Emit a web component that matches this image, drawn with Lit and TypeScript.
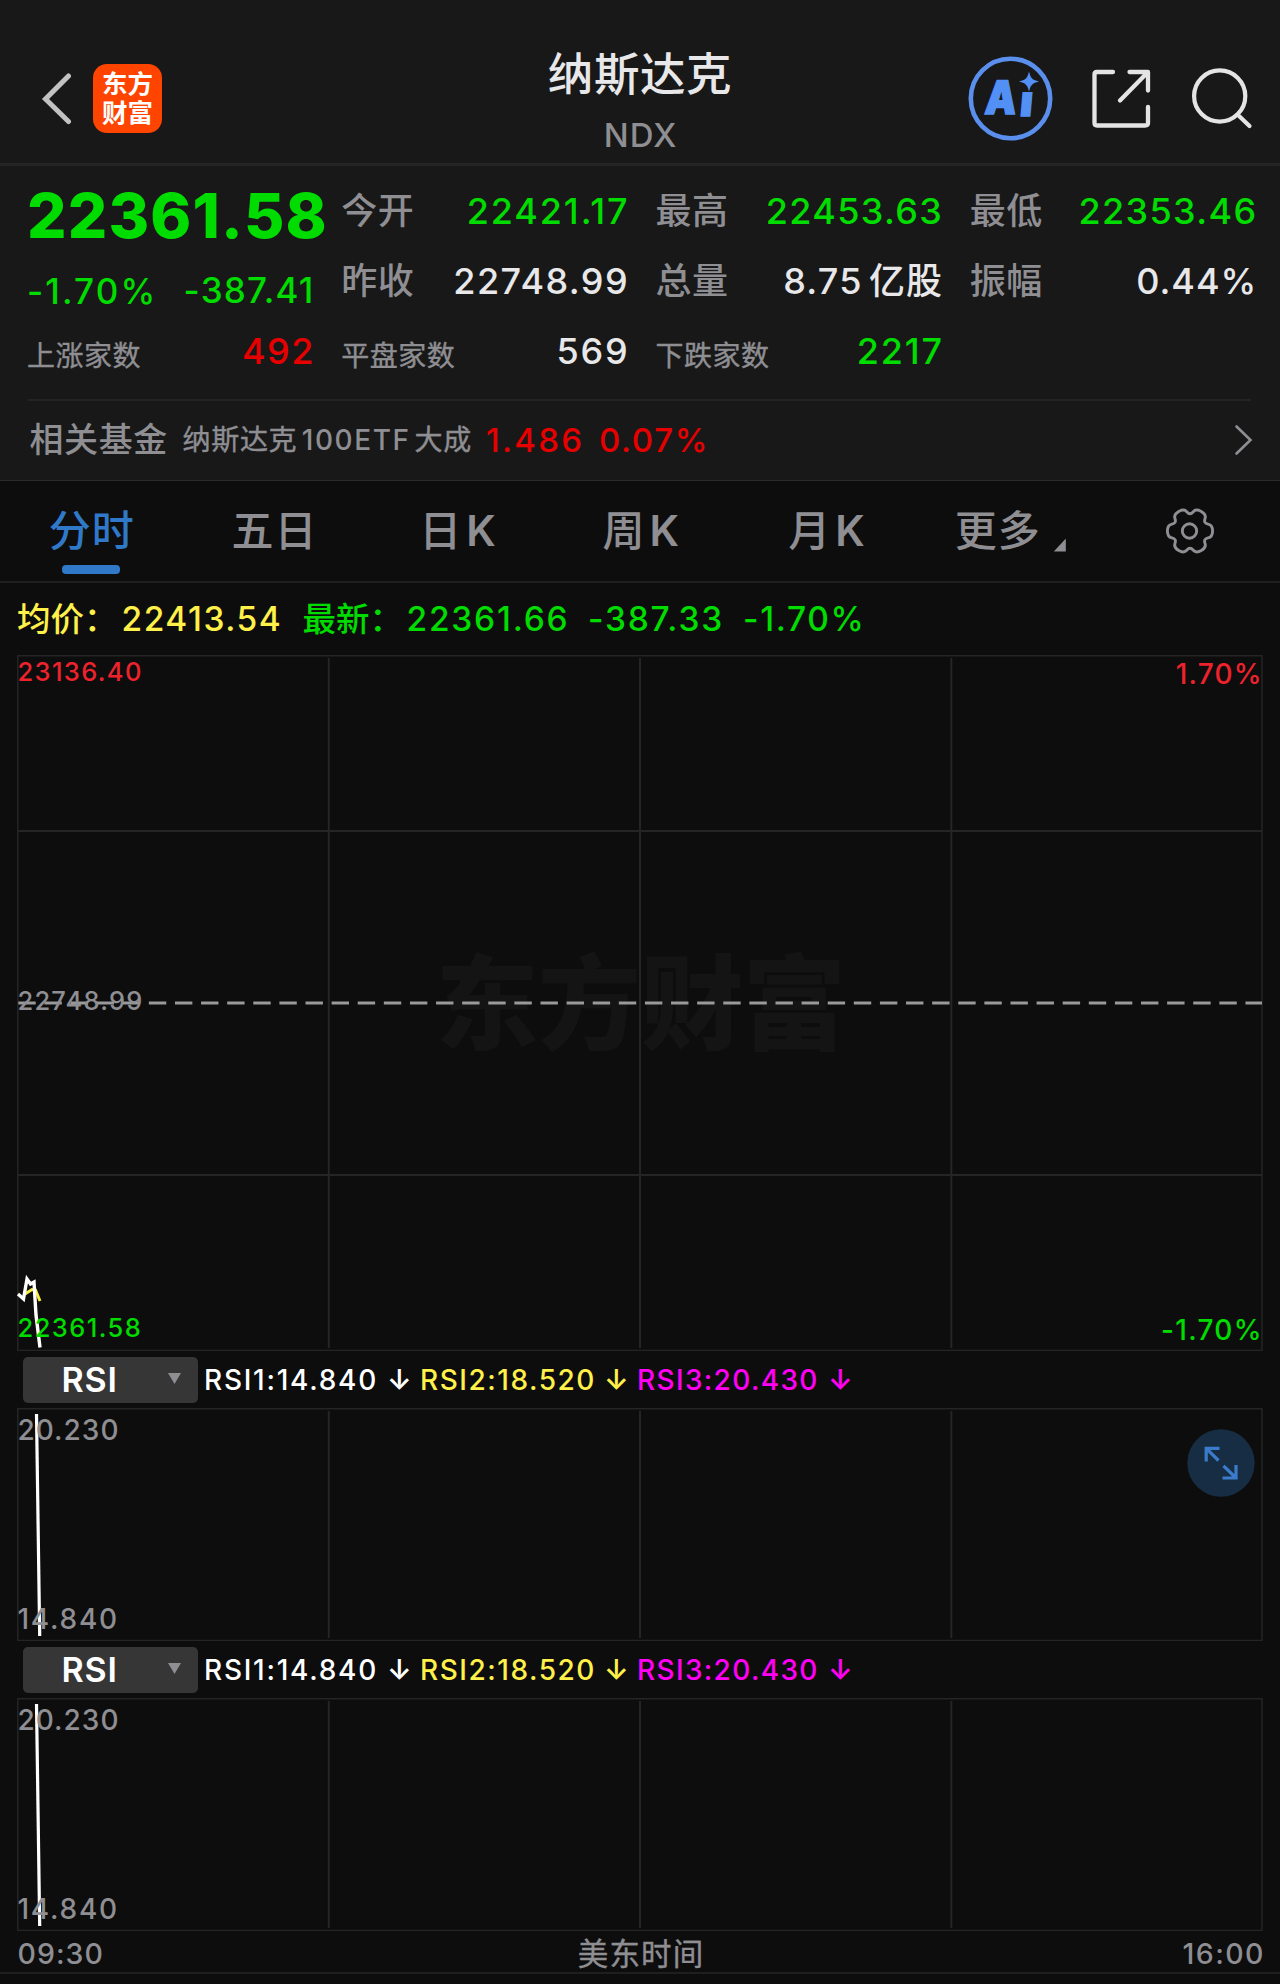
import { LitElement, html, css, svg } from "lit";
import { customElement, property } from "lit/decorators.js";

type Tone = "up" | "down" | "plain" | "muted" | "avg" | "hot" | "magenta";

const tones = css`
  .run { font-weight: 530; }
  .up { color: #e60000; }
  .down { color: #00dc00; }
  .plain { color: #e8e8ea; }
  .muted { color: #8e8e93; }
  .avg { color: #fff04a; }
  .hot { color: #ee222c; }
  .magenta { color: #ff00f4; }
`;

// A run of figures with its tracking in em; the trailing space is taken back so that right edges line up.
const run = (text: string, tone: Tone, track = 0.045, extra = "") =>
  html`<span class="run ${tone} ${extra}" style="letter-spacing:${track}em;margin-right:${-track}em">${text}</span>`;

@customElement("quote-header")
class QuoteHeader extends LitElement {
  static styles = [tones, css`
    :host { display: block; }
    .bar { height: 163px; border-bottom: 3px solid #242424; background: #181818; display: grid;
      grid-template-columns: 1fr auto 1fr; box-sizing: content-box; }
    .left { display: flex; align-items: center; padding: 33px 0 0 41px; height: 130px; }
    .logo { margin-left: 21px; width: 69px; height: 69px; border-radius: 14px; background: #ff4400; color: #fff;
      display: flex; flex-direction: column; align-items: center; justify-content: center; text-align: center;
      font: 700 25.5px/29px Inter, "Noto Sans CJK SC", sans-serif; }
    .logo div { height: 29px; }
    .mid { display: flex; flex-direction: column; align-items: center; }
    .title { margin-top: 45px; font-size: 45.5px; line-height: 60px; letter-spacing: 0.6px; color: #e8e8ea; font-weight: 500; }
    .code { margin-top: 10px; font-size: 33px; line-height: 40px; font-weight: 500; }
    .right { display: flex; justify-content: flex-end; padding-right: 26.7px; padding-top: 33px; height: 130px; align-items: center; }
    svg { display: block; }
    .ai { margin-right: 37px; }
    .share { margin-right: 40.6px; }
    .letters { font: 900 46px Inter, sans-serif; }
  `];
  render() {
    return html`<div class="bar">
      <div class="left">
        <svg width="31" height="54" viewBox="0 0 31 54" fill="none" stroke="#c2c2c2" stroke-width="5" stroke-linecap="round"><path d="M27.5 5 4.5 28 27.5 50.500"/></svg>
        <div class="logo"><div>东方</div><div>财富</div></div>
      </div>
      <div class="mid"><div class="title">纳斯达克</div><div class="code">${run("NDX", "muted", 0.03)}</div></div>
      <div class="right">
        <svg class="ai" width="86" height="86" viewBox="0 0 86 86">
          <defs><clipPath id="stem"><rect x="40" y="37" width="46" height="30"/></clipPath></defs>
          <circle cx="42.500" cy="43.500" r="39.700" fill="none" stroke="#5a8fee" stroke-width="4.600"/>
          <g class="letters" fill="#5390f5" stroke="#5390f5" stroke-width="1.500">
            <text transform="translate(16 58.500) skewX(-5) scale(.86 1)">A</text>
            <g clip-path="url(#stem)"><text transform="translate(51 60.500) skewX(-5) scale(.95 1)">i</text></g>
          </g>
          <path d="M61 20q1.500 5 6.500 6.500-5 1.500-6.500 6.500-1.500-5-6.500-6.500 5-1.500 6.500-6.500z" fill="#5390f5" stroke="#5390f5" stroke-width="2"/>
        </svg>
        <svg class="share" width="60" height="60" viewBox="0 0 60 60" fill="none" stroke="#e4e4e4" stroke-width="4.300" stroke-linecap="round" stroke-linejoin="round">
          <path d="M22 4H6Q3.500 4 3.500 6.500V55Q3.500 57.500 6 57.500H54Q57 57.500 57 55V39M38.500 4H57V22.500M56 5 29 32.500"/></svg>
        <svg width="62" height="62" viewBox="0 0 62 62" fill="none" stroke="#e4e4e4" stroke-width="4.200" stroke-linecap="round"><circle cx="28.700" cy="29" r="25.600"/><path d="M47.500 48.500 58.500 59"/></svg>
      </div>
    </div>`;
  }
}

interface Stat { label: string; small?: boolean; text: string; tone: Tone; track: number; unit?: string; }

@customElement("quote-stats")
class QuoteStats extends LitElement {
  static styles = [tones, css`
    :host { display: block; background: #181818; }
    .grid { height: 233px; display: grid; grid-template-columns: repeat(4, 286.4px); column-gap: 27.9px; padding-left: 27px; box-sizing: border-box; }
    .first { display: flex; flex-direction: column; padding-top: 15px; }
    .price { font-size: 62px; line-height: 70px; }
    .price .run { font-weight: 780; }
    .chg { display: flex; justify-content: space-between; height: 66px; align-items: center; font-size: 35px; padding-top: 7px; }
    .chg .raise { position: relative; top: -1.500px; }
    .col { padding-top: 10px; }
    .row { height: 70px; display: flex; align-items: center; justify-content: space-between; font-size: 36px; line-height: 50px; font-weight: 500; white-space: nowrap; }
    .name { letter-spacing: 0.5px; font-weight: 500; }
    .name.small { font-size: 28px; letter-spacing: 0.5px; padding-top: 10px; font-weight: 400; -webkit-text-stroke: 0.4px #8e8e93; }
    .unit { margin-left: 7.500px; letter-spacing: 1px; margin-right: -1px; }
    .row.lead { height: 53px; }
  `];
  cols: Stat[][] = [
    [{ label: "今开", text: "22421.17", tone: "down", track: 0.052 }, { label: "昨收", text: "22748.99", tone: "plain", track: 0.04 },
     { label: "平盘家数", small: true, text: "569", tone: "plain", track: 0.048 }],
    [{ label: "最高", text: "22453.63", tone: "down", track: 0.038 }, { label: "总量", text: "8.75", tone: "plain", track: 0.034, unit: "亿股" },
     { label: "下跌家数", small: true, text: "2217", tone: "down", track: 0.05 }],
    [{ label: "最低", text: "22353.46", tone: "down", track: 0.038 }, { label: "振幅", text: "0.44%", tone: "plain", track: 0.026 }],
  ];
  stat(s: Stat, extra = "") {
    return html`<div class="row ${extra}"><span class="name muted ${s.small ? "small" : ""}">${s.label}</span>
      <span>${run(s.text, s.tone, s.track)}${s.unit ? html`<span class="unit ${s.tone}">${s.unit}</span>` : ""}</span></div>`;
  }
  render() {
    return html`<div class="grid">
      <div class="first">
        <div class="price">${run("22361.58", "down", 0.019)}</div>
        <div class="chg">${run("-1.70%", "down", 0.061)}${run("-387.41", "down", 0.034, "raise")}</div>
        ${this.stat({ label: "上涨家数", small: true, text: "492", tone: "up", track: 0.04 }, "lead")}
      </div>
      ${this.cols.map((c) => html`<div class="col">${c.map((s) => this.stat(s))}</div>`)}
    </div>`;
  }
}

@customElement("related-fund")
class RelatedFund extends LitElement {
  static styles = [tones, css`
    :host { display: block; background: #181818; border-bottom: 1px solid #2a2a2a; padding: 0 29px 0 28px; }
    .row { border-top: 2px solid #242424; height: 78px; padding-bottom: 1px; display: flex; align-items: center; white-space: nowrap; font-size: 33px; line-height: 40px; font-weight: 500; }
    .title { font-size: 34px; letter-spacing: 0.6px; margin-left: 1.500px; width: 152.500px; font-weight: 500; }
    .fund { font-size: 28px; width: 304px; display: flex; align-items: center; font-weight: 400; letter-spacing: 0.7px; -webkit-text-stroke: 0.4px #8e8e93; }
    .fund .run { -webkit-text-stroke: 0; }
    .fund .cjk { margin-left: 5.500px; }
    .fund .cjk:first-child { margin: 0 4.500px 0 0.500px; }
    .val { width: 113px; }
    svg { margin: 0 -1.500px 0 auto; display: block; }
  `];
  render() {
    return html`<div class="row">
      <span class="title muted">相关基金</span>
      <span class="fund muted"><span class="cjk">纳斯达克</span>${run("100ETF", "muted", 0.055)}<span class="cjk">大成</span></span>
      <span class="val">${run("1.486", "up", 0.07)}</span>
      <span>${run("0.07%", "up", 0.05)}</span>
      <svg width="19" height="32" viewBox="0 0 19 32" fill="none" stroke="#8e8e93" stroke-width="2.600" stroke-linecap="round"><path d="M2.500 2.500 16.500 16 2.500 29.500"/></svg>
    </div>`;
  }
}

// Six-lobed cog outline, smoothed through edge midpoints.
const cog = (() => {
  const p: [number, number][] = [];
  for (let k = 0; k < 6; k++) {
    for (const [off, r] of [[-15, 23.400], [15, 23.400], [30, 15.500]]) {
      const a = ((k * 60 + off) * Math.PI) / 180;
      p.push([26 + r * Math.cos(a), 26 + r * Math.sin(a)]);
    }
  }
  const mid = (a: number[], b: number[]) => `${((a[0] + b[0]) / 2).toFixed(2)} ${((a[1] + b[1]) / 2).toFixed(2)}`;
  let d = `M${mid(p[p.length - 1], p[0])}`;
  p.forEach((q, i) => { d += `Q${q[0].toFixed(2)} ${q[1].toFixed(2)} ${mid(q, p[(i + 1) % p.length])}`; });
  return d + "Z";
})();

@customElement("period-tabs")
class PeriodTabs extends LitElement {
  static styles = css`
    :host { display: block; border-bottom: 2px solid #1f1f20; }
    .tabs { height: 100px; display: grid; grid-template-columns: repeat(3, 182.900px) 183.500px 184.500px 183.300px 180px; font-size: 42px; font-weight: 500; color: #8e8e93; }
    .tab { display: flex; align-items: center; justify-content: center; position: relative; line-height: 60px; letter-spacing: 1px; padding-left: 0.500px; }
    .latin { margin-left: 4px; font-weight: 600; letter-spacing: 0; }
    .wide { padding-left: 4px; }
    .on { color: #3078c8; }
    .on::after { content: ""; position: absolute; bottom: 7px; left: 62px; width: 58px; height: 9px; border-radius: 4px; background: #3078c8; }
    .more { margin: 28px 0 0 13px; width: 12px; height: 13px; background: #8e8e93; clip-path: polygon(100% 0, 100% 100%, 0 100%); }
  `;
  render() {
    return html`<div class="tabs">
      <div class="tab on">分时</div><div class="tab">五日</div>
      ${["日", "周", "月"].map((n) => html`<div class="tab ${n === "月" ? "wide" : ""}">${n}<span class="latin">K</span></div>`)}
      <div class="tab wide">更多<i class="more"></i></div>
      <div class="tab"><svg width="52" height="52" viewBox="0 0 52 52" fill="none" stroke="#8e8e93" stroke-width="2.900"><path d=${cog}/><circle cx="25.500" cy="26" r="7.200"/></svg></div>
    </div>`;
  }
}

@customElement("time-chart")
class TimeChart extends LitElement {
  static styles = [tones, css`
    :host { display: block; }
    .legend { height: 72px; display: grid; grid-template-columns: 104.500px 181px 104px 181.500px 155px auto; align-items: center; justify-content: start;
      padding-left: 17px; font-size: 33.5px; line-height: 40px; font-weight: 500; white-space: nowrap; }
    .plot { position: relative; height: 696px; font-size: 25.5px; line-height: 30px; }
    svg { display: block; position: relative; }
    .mark { position: absolute; inset: -11px 0 0 1px; display: flex; align-items: center; justify-content: center; color: #141415;
      font: 900 103px "Noto Sans CJK SC", sans-serif; letter-spacing: -0.500px; }
    .lab { position: absolute; left: 17.500px; }
    .lab.r { left: auto; right: 18.500px; font-size: 28px; }
    .t { top: 2px; } .tr { top: 4px; } .m { top: 331px; } .b { top: 658px; } .br { top: 660px; }
  `];
  render() {
    return html`
      <div class="legend">
        <span class="avg">均价：</span>${run("22413.54", "avg", 0.046)}
        <span class="down">最新：</span>${run("22361.66", "down", 0.053)}${run("-387.33", "down", 0.053)}${run("-1.70%", "down", 0.05)}
      </div>
      <div class="plot">
        <div class="mark">东方财富</div>
        <svg width="1280" height="696" viewBox="0 0 1280 696" fill="none">
          <g stroke="#252526" stroke-width="1.500">
            <path d="M17.800 .8H1262V695.500H17.800Z"/>
            <path stroke-width="2" d="M328.800 3V693M640 3V693M951.300 3V693M18 176H1262M18 520H1262"/>
          </g>
          <path d="M18.300 348H1262" stroke="#9a9a9a" stroke-width="2.800" stroke-dasharray="17.400 8.710"/>
          <path d="M25 639 32 634.500 35.500 635 40 646" stroke="#f6ee3c" stroke-width="3"/>
          <path d="M18 639 23.500 644 27 624 30.500 629 34 627 36 660 40 692.500" stroke="#fff" stroke-width="3.400"/>
        </svg>
        <span class="lab t">${run("23136.40", "hot", 0.053)}</span><span class="lab r tr">${run("1.70%", "hot", 0.042)}</span>
        <span class="lab m">${run("22748.99", "muted", 0.047)}</span>
        <span class="lab b">${run("22361.58", "down", 0.056)}</span><span class="lab r br">${run("-1.70%", "down", 0.046)}</span>
      </div>`;
  }
}

@customElement("rsi-panel")
class RsiPanel extends LitElement {
  @property({ type: Boolean }) expand = false;
  static styles = [tones, css`
    :host { display: block; font-weight: 500; }
    .head { height: 57px; display: flex; align-items: center; padding-left: 23px; font-size: 28px; }
    .pick { width: 175px; height: 46px; border-radius: 5px; background: #363636; display: flex; align-items: center; box-sizing: border-box;
      padding: 0 17px 0 38.500px; justify-content: space-between; font-size: 34px; line-height: 46px; color: #fff; font-weight: 600; letter-spacing: 0.025em; }
    .caret { width: 13px; height: 11px; background: #8e8e93; clip-path: polygon(0 0, 100% 0, 50% 100%); margin-top: -2px; }
    .vals { margin-left: 6px; display: grid; grid-template-columns: 216px 217px auto; }
    .val { display: flex; align-items: center; line-height: 40px; }
    .num { width: 183px; }
    .arrow { font-weight: 600; }
    .val:nth-child(2) .num { width: 184px; }
    .val:nth-child(3) .num { width: 191px; }
    .white, .white .run { color: #fff; }
    .plot { position: relative; height: 233px; font-size: 28px; line-height: 30px; }
    svg { display: block; }
    .lab { position: absolute; left: 17.500px; }
    .t { top: 7px; } .b { bottom: 7px; }
    .full { position: absolute; left: 1186.500px; top: 21px; }
  `];
  render() {
    const vals: [string, Tone, number, string][] = [["RSI1:14.840", "plain", 0.062, "white"], ["RSI2:18.520", "avg", 0.055, ""], ["RSI3:20.430", "magenta", 0.048, ""]];
    return html`
      <div class="head">
        <div class="pick"><span>RSI</span><i class="caret"></i></div>
        <div class="vals">${vals.map(([s, tone, tr, w]) => html`<div class="val ${tone} ${w}"><span class="num">${run(s, tone, tr)}</span><span class="arrow">↓</span></div>`)}</div>
      </div>
      <div class="plot">
        <svg width="1280" height="233" viewBox="0 0 1280 233" fill="none">
          <g stroke="#252526" stroke-width="1.500"><path d="M17.800 .8H1262V232.500H17.800Z"/><path stroke-width="2" d="M328.800 3V230M640 3V230M951.300 3V230"/></g>
          <path d="M36.500 6 39.700 228" stroke="#fff" stroke-width="3.200"/>
        </svg>
        <span class="lab t">${run("20.230", "muted", 0.036)}</span><span class="lab b">${run("14.840", "muted", 0.062)}</span>
        ${this.expand ? html`<svg class="full" width="68" height="68" viewBox="0 0 68 68" fill="none" stroke="#3a7ccb" stroke-width="3.200">
          <circle cx="34" cy="34" r="33.700" fill="#172d44" stroke="none"/>
          ${svg`<path d="M32.500 19.300H19.200V32.500M19.700 19.800 31.500 31.500M35.500 49H49V36M48.500 48.500 36.500 36.800"/>`}
        </svg>` : ""}
      </div>`;
  }
}

@customElement("app-root")
class AppRoot extends LitElement {
  static styles = [tones, css`
    :host { display: block; width: 1280px; height: 1984px; overflow: hidden; background: #0d0d0d; font-family: Inter, "Noto Sans CJK SC", sans-serif; }
    .time { height: 43px; border-bottom: 2px solid #1f1f20; display: grid; grid-template-columns: 1fr auto 1fr; align-items: center;
      padding: 4px 16.500px 0 17.500px; box-sizing: border-box; font-size: 28.500px; font-weight: 500; color: #8e8e93; line-height: 36px; }
    .zone { font-size: 30.500px; letter-spacing: 1.200px; margin-right: -1.200px; font-weight: 400; -webkit-text-stroke: 0.4px #8e8e93; }
    .end { text-align: right; }
  `];
  render() {
    return html`
      <quote-header></quote-header>
      <quote-stats></quote-stats>
      <related-fund></related-fund>
      <period-tabs></period-tabs>
      <time-chart></time-chart>
      <rsi-panel expand></rsi-panel>
      <rsi-panel></rsi-panel>
      <div class="time"><span>${run("09:30", "muted", 0.036)}</span><span class="zone">美东时间</span><span class="end">${run("16:00", "muted", 0.05)}</span></div>`;
  }
}
